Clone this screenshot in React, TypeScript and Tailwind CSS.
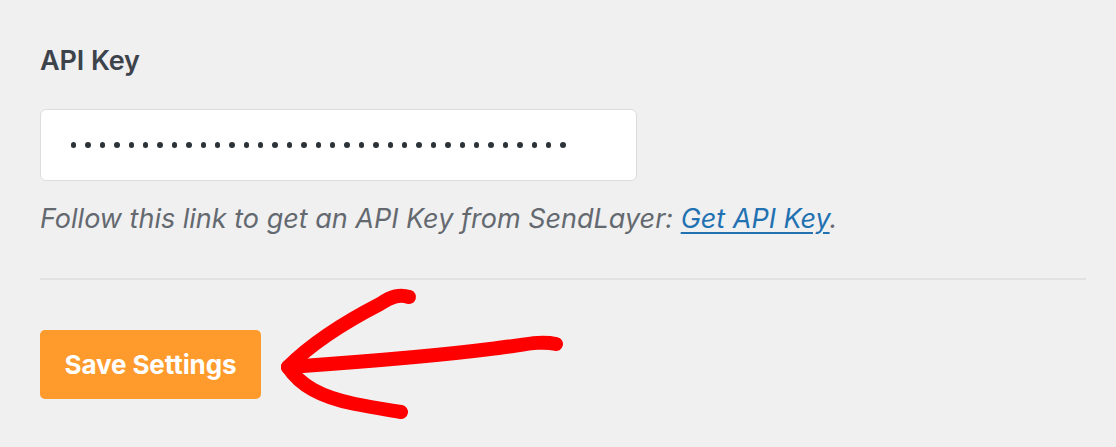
import React from "react";

export default function App() {
  const dots = Array.from({ length: 35 });
  return (
    <div
      className="w-[1116px] h-[447px] bg-[#f0f0f1] overflow-hidden relative"
      style={{ fontFamily: "Inter, 'Liberation Sans', sans-serif" }}
    >
      <div className="pl-[40px] pt-[46px] w-[1086px]">
        <div className="text-[27px] font-semibold text-[#3c434a] leading-[30px] tracking-[-0.1px]">
          API Key
        </div>
        <div className="mt-[33px] w-[597px] h-[72px] bg-white border-[1.5px] border-[#dcdcde] rounded-[6px] flex items-center pl-[30px] gap-[9px]">
          {dots.map((_, i) => (
            <span key={i} className="block w-[5.4px] h-[5.4px] rounded-full bg-[#2c3338]" />
          ))}
        </div>
        <div className="mt-[22px] text-[27px] italic text-[#646970] leading-[32px]">
          Follow this link to get an API Key from SendLayer:{" "}
          <a href="#" className="text-[#2271b1] underline decoration-[2px] underline-offset-[4px]">
            Get API Key
          </a>
          .
        </div>
        <div className="mt-[43px] h-[2px] bg-[#e2e2e4]" />
        <div className="mt-[50px] flex">
          <button className="w-[221px] h-[69px] rounded-[5px] bg-[#ff9b2d] text-white text-[26px] font-bold tracking-[-0.1px]">
            Save Settings
          </button>
        </div>
      </div>
      <svg
        className="absolute left-0 top-0 pointer-events-none"
        width="1116"
        height="447"
        viewBox="0 0 1116 447"
      >
        <g fill="none" stroke="#ff0000" strokeLinecap="round" strokeLinejoin="round">
          <path d="M288 367 C 330 364, 420 358, 490 349 C 520 346, 538 340, 556 344" strokeWidth="14" />
          <path d="M288 367 C 310 345, 345 322, 380 304 C 392 296, 400 294, 409 297" strokeWidth="14" />
          <path d="M288 367 C 300 385, 320 397, 355 404 C 375 408, 390 410, 401 412" strokeWidth="14" />
        </g>
      </svg>
    </div>
  );
}
